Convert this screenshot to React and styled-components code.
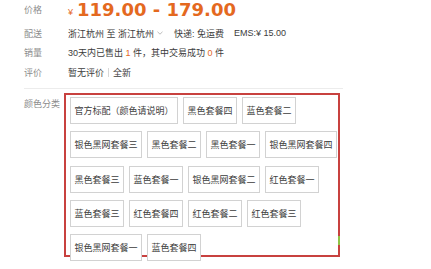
import styled, { createGlobalStyle } from 'styled-components';

const GlobalStyle = createGlobalStyle`
	html, body {
		margin: 0;
		padding: 0;
		background: #fff;
	}
	body {
		width: 431px;
		height: 269px;
		overflow: hidden;
		font-family: 'Liberation Sans', 'Noto Sans CJK SC', sans-serif;
		font-size: 9px;
		color: #3c3c3c;
	}
`;

const skuList = [
	'官方标配（颜色请说明）',
	'黑色套餐四',
	'蓝色套餐二',
	'银色黑网套餐三',
	'黑色套餐二',
	'黑色套餐一',
	'银色黑网套餐四',
	'黑色套餐三',
	'蓝色套餐一',
	'银色黑网套餐二',
	'红色套餐一',
	'蓝色套餐三',
	'红色套餐四',
	'红色套餐二',
	'红色套餐三',
	'银色黑网套餐一',
	'蓝色套餐四',
];

function Chevron() {
	return (
		<svg width="6" height="4" viewBox="0 0 6 4">
			<path d="M0.5 0.8 L3 3.2 L5.5 0.8" fill="none" stroke="#aaa" strokeWidth="0.8" />
		</svg>
	);
}

export default function App() {
	return (
		<>
			<GlobalStyle />
			<Panel>
				<PriceRow>
					<Label>价格</Label>
					<Price>
						<Yen>¥</Yen>
						<Amount>119.00 - 179.00</Amount>
					</Price>
				</PriceRow>

				<InfoRow $first>
					<Label>配送</Label>
					<Value>
						<span>浙江杭州 至 浙江杭州</span>
						<Drop>
							<Chevron />
						</Drop>
						<Gap $w={11}>快递: 免运费</Gap>
						<Gap $w={10}>EMS:¥ 15.00</Gap>
					</Value>
				</InfoRow>
				<InfoRow>
					<Label>销量</Label>
					<Value>
						30天内已售出 <Num>1</Num> 件，其中交易成功 <Num>0</Num> 件
					</Value>
				</InfoRow>
				<InfoRow>
					<Label>评价</Label>
					<Value>
						暂无评价<Sep />全新
					</Value>
				</InfoRow>

				<Divider />

				<SkuRow>
					<SkuLabel>颜色分类</SkuLabel>
					<SkuBox>
						{skuList.map((name) => (
							<SkuItem key={name}>{name}</SkuItem>
						))}
						<Marker />
					</SkuBox>
				</SkuRow>
			</Panel>
		</>
	);
}

const Panel = styled.div`
	width: 319px;
	padding-left: 24px;
	padding-top: 1.5px;
`;

const PriceRow = styled.div`
	display: flex;
	align-items: center;
	height: 16.5px;
`;

const Label = styled.div`
	width: 44px;
	flex-shrink: 0;
	color: #8c8c8c;
`;

const Price = styled.div`
	display: flex;
	align-items: baseline;
	color: #e4691f;
`;

const Yen = styled.span`
	font-size: 9px;
	margin-right: 4px;
	position: relative;
	top: -1px;
`;

const Amount = styled.span`
	font-family: 'DejaVu Sans', Verdana, sans-serif;
	font-weight: bold;
	font-size: 18px;
	line-height: 21px;
`;

const InfoRow = styled.div`
	display: flex;
	align-items: center;
	height: 19.5px;
	margin-top: ${(p) => (p.$first ? '5.5px' : '0')};
`;

const Value = styled.div`
	display: flex;
	align-items: center;
	white-space: pre;
`;

const Drop = styled.span`
	display: inline-flex;
	margin-left: 3px;
`;

const Gap = styled.span`
	margin-left: ${(p) => p.$w}px;
`;

const Num = styled.span`
	color: #e4691f;
`;

const Sep = styled.span`
	display: inline-block;
	width: 1px;
	height: 9px;
	background: #d8d8d8;
	margin: 0 4px;
`;

const Divider = styled.div`
	height: 1px;
	background: #ececec;
	margin-top: 6px;
`;

const SkuRow = styled.div`
	display: flex;
	margin-top: 4px;
`;

const SkuLabel = styled.div`
	width: 39.5px;
	flex-shrink: 0;
	padding-top: 5px;
	line-height: 12px;
	color: #8c8c8c;
`;

const SkuBox = styled.div`
	position: relative;
	box-sizing: border-box;
	width: 276.5px;
	height: 164px;
	border: 2px solid #c8413f;
	padding: 2px 0 0 4.5px;
	display: flex;
	flex-wrap: wrap;
	align-content: flex-start;
	gap: 7.3px 5px;
`;

const SkuItem = styled.div`
	box-sizing: border-box;
	height: 27px;
	line-height: 25px;
	padding: 0 3.5px;
	border: 1px solid #d2d2d2;
	background: #fff;
	color: #3c3c3c;
	white-space: nowrap;
	font-family: 'Noto Sans CJK SC', sans-serif;
`;

const Marker = styled.div`
	position: absolute;
	right: -2px;
	top: 141px;
	width: 2px;
	height: 9px;
	background: #8fc446;
`;
